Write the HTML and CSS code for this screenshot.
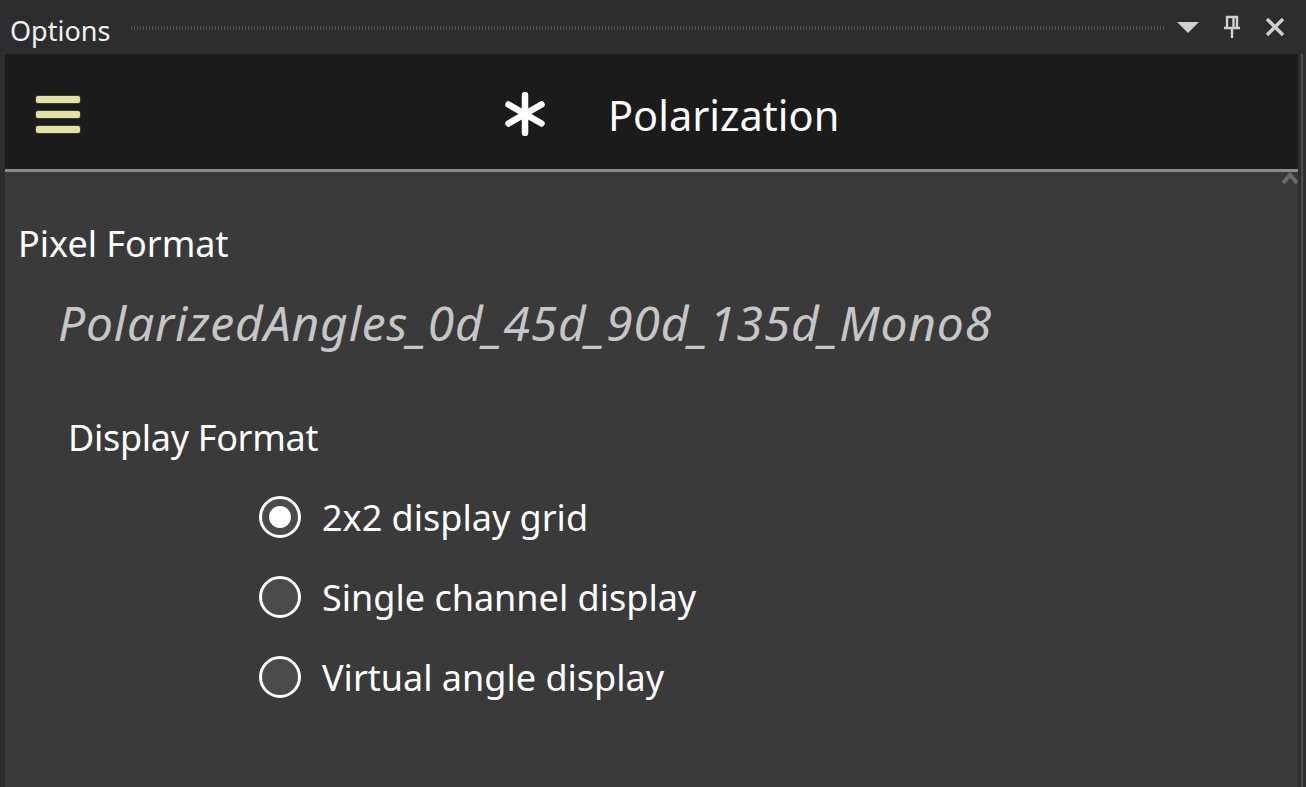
FILE: index.html
```html
<!DOCTYPE html>
<html>
<head>
<meta charset="utf-8">
<link rel="stylesheet" href="styles.css">
</head>
<body>
<div class="window">
  <div class="titlebar">
    <span class="title">Options</span>
    <span class="dots"></span>
    <span class="tb-icons">
      <svg class="tb-icon" width="24" height="14" viewBox="0 0 24 14"><polygon points="1,2 23,2 12,13" fill="#d0d0d0"/></svg>
      <svg class="tb-icon" width="20" height="24" viewBox="0 0 20 24"><path d="M5 2h10v11H5z M11.5 2v11 M2 13h16 M10 13v10" stroke="#d0d0d0" stroke-width="2.4" fill="none"/></svg>
      <svg class="tb-icon" width="22" height="22" viewBox="0 0 22 22"><path d="M3 3L19 19M19 3L3 19" stroke="#d0d0d0" stroke-width="3.4"/></svg>
    </span>
  </div>
  <div class="body">
    <div class="panel">
      <div class="header">
        <div class="hamburger"><span></span><span></span><span></span></div>
        <div class="header-title">
          <svg class="asterisk" width="44" height="44" viewBox="0 0 44 44"><g stroke="#fff" stroke-width="6.5" stroke-linecap="round"><path d="M22 3V41"/><path d="M5.5 12.5L38.5 31.5"/><path d="M38.5 12.5L5.5 31.5"/></g></svg>
          <span class="header-text">Polarization</span>
        </div>
      </div>
      <div class="content">
        <svg class="scroll-up" width="16" height="14" viewBox="0 0 16 14"><path d="M1 11L8 3L15 11" stroke="#6a6a6a" stroke-width="4" fill="none"/></svg>
        <div class="label">Pixel Format</div>
        <div class="value">PolarizedAngles_0d_45d_90d_135d_Mono8</div>
        <div class="label sub">Display Format</div>
        <div class="radios">
          <div class="radio-row"><span class="radio checked"></span><span class="radio-text">2x2 display grid</span></div>
          <div class="radio-row"><span class="radio"></span><span class="radio-text">Single channel display</span></div>
          <div class="radio-row"><span class="radio"></span><span class="radio-text">Virtual angle display</span></div>
        </div>
      </div>
    </div>
    <div class="rightbar"><span class="rline"></span></div>
  </div>
</div>
</body>
</html>
```
FILE: styles.css
```css
html, body {
  margin: 0;
  padding: 0;
  background: #2d2d30;
}
body {
  width: 1306px;
  height: 787px;
  overflow: hidden;
  font-family: "Open Sans", "Noto Sans", sans-serif;
}
.window {
  display: flex;
  flex-direction: column;
  height: 787px;
}
.titlebar {
  height: 54px;
  display: flex;
  align-items: center;
  padding-left: 10px;
  box-sizing: border-box;
  background: #2d2d30;
}
.title {
  color: #f1f1f1;
  font-size: 27px;
  font-family: "Noto Sans", "Open Sans", sans-serif;
  line-height: 1;
  margin-top: 7px;
}
.dots {
  flex: 1;
  height: 4px;
  margin: 2px 12px 0 20px;
  background-image: radial-gradient(circle, #555558 0.8px, transparent 1px);
  background-size: 3px 2px;
}
.tb-icons {
  display: flex;
  align-items: center;
  gap: 22px;
  padding-right: 20px;
}
.tb-icon { display: block; }
.body {
  flex: 1;
  display: flex;
  padding-left: 5px;
}
.panel {
  flex: 1;
  display: flex;
  flex-direction: column;
}
.header {
  height: 118px;
  box-sizing: border-box;
  padding-top: 6px;
  background: #1b1b1b;
  border-bottom: 3px solid #8a8a8a;
  display: flex;
  align-items: center;
}
.hamburger {
  display: flex;
  flex-direction: column;
  gap: 8px;
  margin-left: 31px;
}
.hamburger span {
  display: block;
  width: 44px;
  height: 7px;
  background: #e4e1a5;
  border-radius: 2px;
  box-shadow: 0 0 0 1px #3a3a30;
}
.header-title {
  display: flex;
  align-items: center;
  margin-left: 423px;
  gap: 61px;
}
.asterisk { display: block; margin-top: -2px; }
.header-text {
  color: #ffffff;
  font-size: 41.5px;
  font-family: "Noto Sans", sans-serif;
}
.content {
  flex: 1;
  background: #3a3a3a;
  position: relative;
  padding-top: 48px;
  padding-left: 13px;
}
.scroll-up {
  position: absolute;
  right: 0;
  top: 0;
}
.label {
  color: #ffffff;
  font-size: 36px;
  font-family: "Noto Sans", sans-serif;
  line-height: 48px;
}
.value {
  color: #c6c6c6;
  font-size: 48px;
  font-style: italic;
  font-family: "Noto Sans", sans-serif;
  letter-spacing: 0.8px;
  margin-left: 40px;
  margin-top: 27px;
  line-height: 56px;
}
.label.sub {
  margin-left: 50px;
  margin-top: 63px;
  letter-spacing: -0.3px;
}
.radios {
  display: flex;
  flex-direction: column;
  gap: 38px;
  margin-left: 241px;
  margin-top: 34px;
}
.radio-row {
  display: flex;
  align-items: center;
  gap: 21px;
  height: 42px;
}
.radio {
  width: 42px;
  height: 42px;
  box-sizing: border-box;
  border: 3px solid #ffffff;
  border-radius: 50%;
  background: #4a4a4a;
  position: relative;
  flex: none;
}
.radio.checked::after {
  content: "";
  position: absolute;
  left: 7px;
  top: 7px;
  width: 22px;
  height: 22px;
  border-radius: 50%;
  background: #ffffff;
}
.radio-text {
  color: #ffffff;
  font-size: 36px;
  font-family: "Noto Sans", sans-serif;
}
.rightbar {
  width: 8px;
  background: #2d2d30;
  display: flex;
  justify-content: center;
}
.rline {
  width: 2px;
  background: #4e4e52;
}
```
